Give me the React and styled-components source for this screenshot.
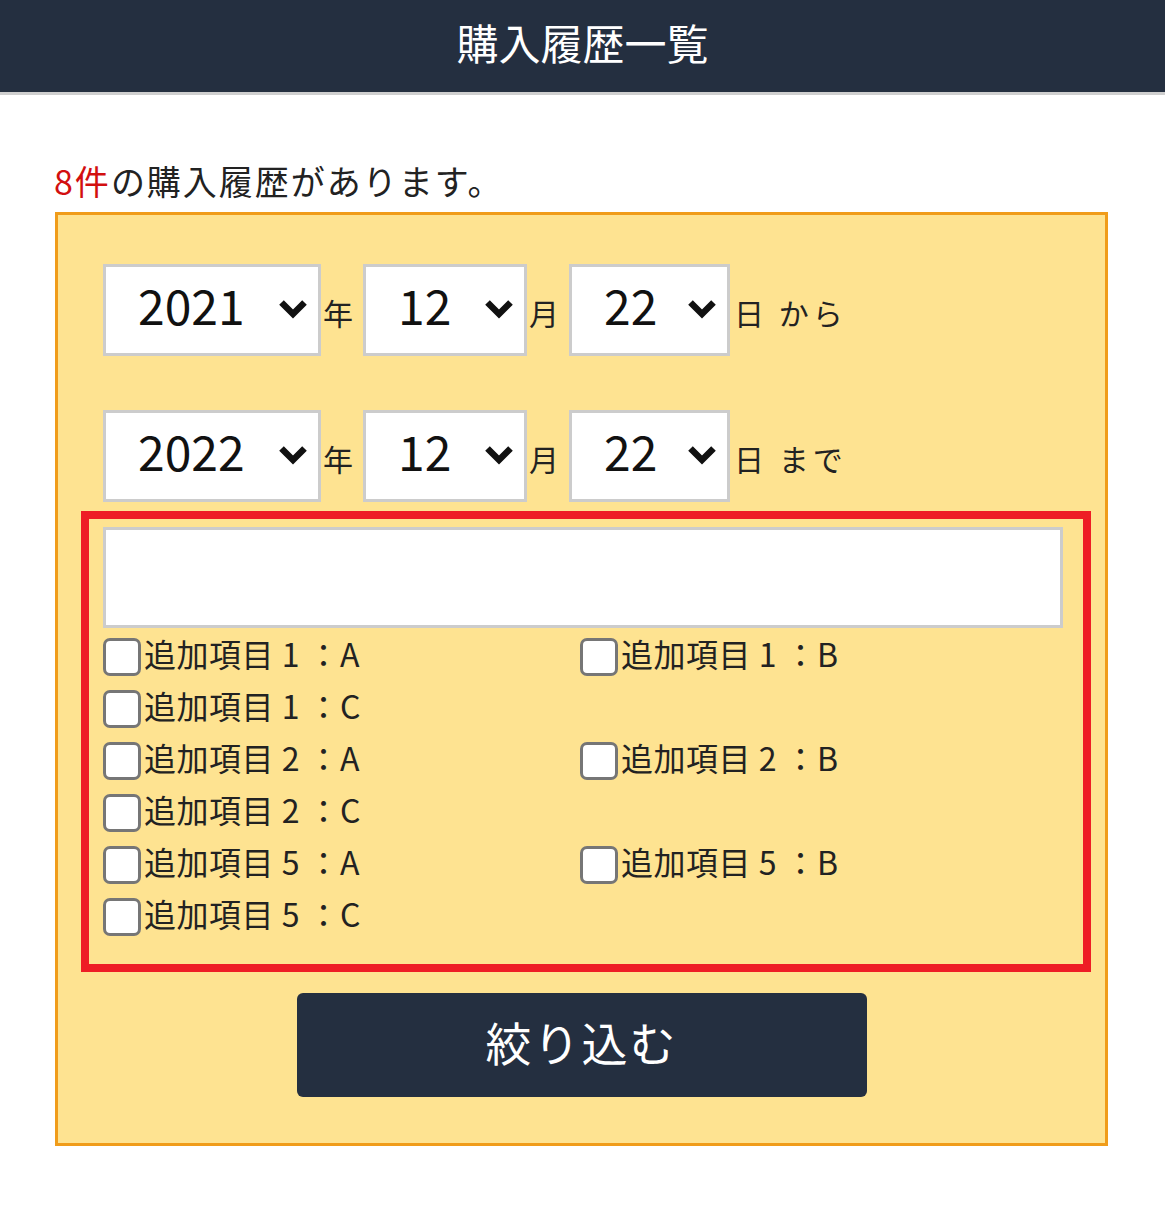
import styled, { createGlobalStyle } from 'styled-components';

const GlobalStyle = createGlobalStyle`
  body {
    margin: 0;
    background: #fff;
    font-family: "Noto Sans CJK JP", "Noto Sans", sans-serif;
    color: #222;
  }
  * {
    box-sizing: border-box;
  }
`;

const Header = styled.header`
  height: 95px;
  background: #242f40;
  border-bottom: 3px solid #cfcfcf;
  display: flex;
  align-items: center;
  justify-content: center;
`;
const Title = styled.h1`
  margin: 0 0 10px;
  font-size: 42px;
  font-weight: 400;
  color: #fff;
`;
const Main = styled.main`
  padding: 0 57px 60px 55px;
`;
const Count = styled.p`
  margin: 66px 0 11px -1px;
  font-size: 34px;
  line-height: 40px;
  letter-spacing: 2px;
`;
const Num = styled.span`
  color: #d20f0f;
`;
const FilterBox = styled.form`
  border: 3px solid #f09c1a;
  background: #fee391;
  padding: 49px 0 46px;
`;
const DateRow = styled.div`
  display: flex;
  align-items: center;
  padding-left: 45px;
  margin-bottom: ${(p) => p.$gap || 0}px;
`;
const SelectWrap = styled.div`
  position: relative;
  width: ${(p) => p.$w}px;
  height: 92px;
`;
const Select = styled.select`
  appearance: none;
  width: 100%;
  height: 100%;
  border: 3px solid #cccccc;
  border-radius: 0;
  background: #fff;
  font-family: inherit;
  font-size: 48px;
  color: #111;
  padding: 0 0 12px 32px;
  outline: none;
`;
const Chevron = styled.svg`
  position: absolute;
  right: 13px;
  top: 34px;
  pointer-events: none;
`;
const Unit = styled.span`
  font-size: 30px;
  margin: 4px 10px 0 ${(p) => p.$left || 2}px;
  letter-spacing: ${(p) => p.$spacing || 0}px;
  color: #222;
  white-space: pre;
`;
const RedBox = styled.div`
  margin: 9px 14px 0 23px;
  border: 8px solid #ee1d25;
  padding: 8px 20px 21px 14px;
`;
const TextInput = styled.input`
  display: block;
  width: 100%;
  height: 101px;
  border: 3px solid #cccccc;
  background: #fff;
  outline: none;
  margin-bottom: 3px;
`;
const Group = styled.div`
  display: grid;
  grid-template-columns: 477px 1fr;
`;
const CheckItem = styled.label`
  display: flex;
  align-items: center;
  height: 52px;
  font-size: 32px;
  letter-spacing: 0.5px;
  color: #222;
`;
const ItemText = styled.span`
  margin-bottom: 8px;
`;
const Box = styled.input`
  appearance: none;
  width: 38px;
  height: 38px;
  margin: 0 3px 0 0;
  border: 3px solid #767676;
  border-radius: 7px;
  background: #fff;
`;
const Button = styled.button`
  display: block;
  width: 570px;
  height: 104px;
  margin: 21px auto 0;
  padding: 0 0 8px;
  border: none;
  border-radius: 6px;
  background: #242f40;
  color: #fff;
  font-family: inherit;
  font-size: 46px;
  letter-spacing: 2px;
  cursor: pointer;
`;

const Arrow = () => (
  <Chevron width="30" height="22" viewBox="0 0 30 22">
    <path d="M3.5 4.5 L15 16 L26.5 4.5" fill="none" stroke="#111" strokeWidth="6.5" />
  </Chevron>
);

const DateSelect = ({ w, value }) => (
  <SelectWrap $w={w}>
    <Select defaultValue={value}>
      <option value={value}>{value}</option>
    </Select>
    <Arrow />
  </SelectWrap>
);

const rows = [
  { y: '2021', suffix: '日 から', gap: 54 },
  { y: '2022', suffix: '日 まで', gap: 0 },
];
const groups = ['1', '2', '5'];

export default function App() {
  return (
    <>
      <GlobalStyle />
      <Header>
        <Title>購入履歴一覧</Title>
      </Header>
      <Main>
        <Count>
          <Num>8件</Num>の購入履歴があります。
        </Count>
        <FilterBox onSubmit={(e) => e.preventDefault()}>
          {rows.map((r) => (
            <DateRow key={r.y} $gap={r.gap}>
              <DateSelect w={218} value={r.y} />
              <Unit>年</Unit>
              <DateSelect w={164} value="12" />
              <Unit>月</Unit>
              <DateSelect w={161} value="22" />
              <Unit $left={4} $spacing={4}>{r.suffix}</Unit>
            </DateRow>
          ))}
          <RedBox>
            <TextInput type="text" />
            {groups.map((g) => (
              <Group key={g}>
                {['A', 'B', 'C'].map((k) => (
                  <CheckItem key={k}>
                    <Box type="checkbox" />
                    <ItemText>追加項目 {g} ：{k}</ItemText>
                  </CheckItem>
                ))}
              </Group>
            ))}
          </RedBox>
          <Button type="submit">絞り込む</Button>
        </FilterBox>
      </Main>
    </>
  );
}
